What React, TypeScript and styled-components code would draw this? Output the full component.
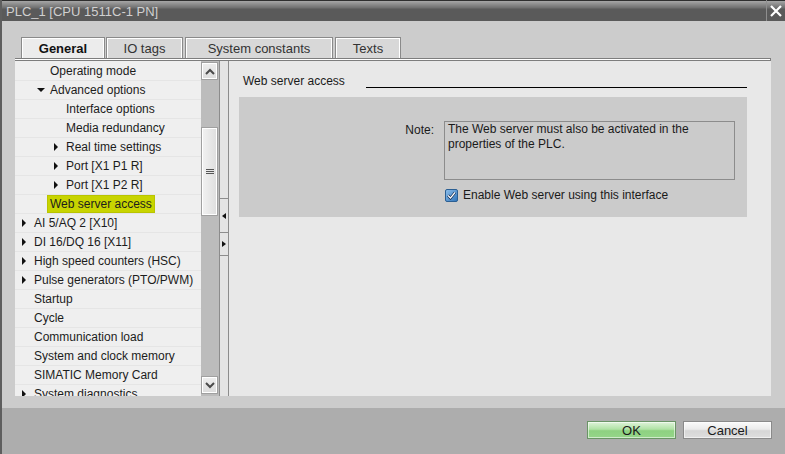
import React from 'react';
import styled, { createGlobalStyle } from 'styled-components';

const Global = createGlobalStyle`
  html, body { margin: 0; padding: 0; background: #cccccc; }
  body { font-family: "Liberation Sans", Arial, sans-serif; }
  * { box-sizing: border-box; }
`;

const Window = styled.div`
  width: 785px;
  height: 454px;
  display: flex;
  flex-direction: column;
  overflow: hidden;
  border-left: 2px solid #5e5e5e;
  background: #cccccc;
`;

const TitleBar = styled.div`
  height: 21px;
  flex: none;
  display: flex;
  align-items: center;
  padding-left: 4px;
  background: linear-gradient(#2e2e2e 0 1px, #a6a6a6 1px, #6e6e6e 8px, #5a5a5a 9px, #5a5a5a 100%);
  color: #d0d0d0;
  font-size: 13px;
`;

const TitleText = styled.div`
  flex: 1;
  padding-top: 1px;
`;

const CloseButton = styled.div`
  width: 19px;
  height: 21px;
  border-left: 1px solid #8e8e8e;
  display: flex;
  align-items: center;
  justify-content: center;
`;

const Body = styled.div`
  flex: 1;
  display: flex;
  flex-direction: column;
  padding: 16px 14px 12px 13px;
  min-height: 0;
`;

const TabStrip = styled.div`
  display: flex;
  height: 21px;
  padding-left: 6px;
  flex: none;
`;

const Tab = styled.div<{ $w: number; $gap: number; $active?: boolean }>`
  width: ${p => p.$w}px;
  margin-right: ${p => p.$gap}px;
  height: 21px;
  border: 1px solid #8a8a8a;
  border-bottom: none;
  box-shadow: inset 1px 1px 0 #ffffff, inset -1px 0 0 #ffffff;
  background: ${p => (p.$active ? '#ececec' : '#d8d8d8')};
  font-size: 13px;
  font-weight: ${p => (p.$active ? 700 : 400)};
  color: ${p => (p.$active ? '#111' : '#333')};
  display: flex;
  align-items: center;
  justify-content: center;
  padding-top: 1px;
`;

const Panel = styled.div`
  flex: 1;
  display: flex;
  flex-direction: column;
  min-height: 0;
`;

const PanelEdge = styled.div`
  height: 3px;
  flex: none;
  background: #ffffff;
  border-top: 1px solid #7d7d7d;
  border-bottom: 1px solid #7d7d7d;
  border-right: 1px solid #7d7d7d;
`;

const PanelBody = styled.div`
  flex: 1;
  display: flex;
  min-height: 0;
`;

const Tree = styled.div`
  width: 186px;
  flex: none;
  background: #efefef;
  overflow: hidden;
  padding-top: 1px;
`;

const Row = styled.div<{ $level: number }>`
  height: 19px;
  border-bottom: 1px solid #e5e5e5;
  display: flex;
  align-items: center;
  padding-left: ${p => 7 + p.$level * 16}px;
  font-size: 12px;
  color: #1c1c1c;
  white-space: nowrap;
`;

const ArrowSlot = styled.div`
  width: 12px;
  height: 18px;
  flex: none;
  display: flex;
  align-items: center;
`;

const ArrowRight = styled.div`
  width: 0;
  height: 0;
  border-top: 4px solid transparent;
  border-bottom: 4px solid transparent;
  border-left: 4px solid #111;
`;

const ArrowDown = styled.div`
  width: 0;
  height: 0;
  border-left: 4px solid transparent;
  border-right: 4px solid transparent;
  border-top: 4px solid #111;
  margin-left: -1px;
`;

const RowLabel = styled.div<{ $selected?: boolean }>`
  height: 18px;
  line-height: 18px;
  margin-left: -3px;
  padding: 0 3px;
  background: ${p => (p.$selected ? '#c8d400' : 'transparent')};
  box-shadow: ${p => (p.$selected ? 'inset 0 0 0 1px #b9c400' : 'none')};
`;

const ScrollBar = styled.div`
  width: 18px;
  flex: none;
  background: #bcbcbc;
  display: flex;
  flex-direction: column;
  padding: 1px 1px 2px 0;
`;

const ScrollBtn = styled.div`
  height: 18px;
  flex: none;
  border: 1px solid #a0a0a0;
  box-shadow: inset 0 0 0 1px #ffffff;
  background: linear-gradient(#eeeeee, #dcdcdc);
  display: flex;
  align-items: center;
  justify-content: center;
`;

const Track = styled.div`
  flex: 1;
`;

const Thumb = styled.div<{ $top: number; $h: number }>`
  margin-top: ${p => p.$top}px;
  height: ${p => p.$h}px;
  border: 1px solid #a0a0a0;
  box-shadow: inset 0 0 0 1px #ffffff;
  background: linear-gradient(90deg, #f2f2f2, #dedede);
  display: flex;
  flex-direction: column;
  align-items: center;
  justify-content: center;
  gap: 1px;
`;

const Grip = styled.div`
  width: 8px;
  height: 1px;
  background: #555;
`;

const Splitter = styled.div`
  width: 10px;
  flex: none;
  background: #e4e4e4;
  border-left: 1px solid #8c8c8c;
  border-right: 1px solid #8c8c8c;
  display: flex;
  flex-direction: column;
  padding-top: 137px;
`;

const SplitBtn = styled.div<{ $h: number }>`
  height: ${p => p.$h}px;
  border-top: 1px solid #8c8c8c;
  display: flex;
  align-items: center;
  justify-content: center;
  &:last-child { border-bottom: 1px solid #8c8c8c; }
`;

const TinyLeft = styled.div`
  width: 0;
  height: 0;
  border-top: 3px solid transparent;
  border-bottom: 3px solid transparent;
  border-right: 4px solid #111;
`;

const TinyRight = styled.div`
  width: 0;
  height: 0;
  border-top: 3px solid transparent;
  border-bottom: 3px solid transparent;
  border-left: 4px solid #111;
`;

const Content = styled.div`
  flex: 1;
  background: #e8e8e8;
  padding: 12px 24px 0 10px;
`;

const HeadingRow = styled.div`
  display: grid;
  grid-template-columns: 123px 1fr;
  align-items: end;
  height: 16px;
  padding-left: 4px;
`;

const HeadingText = styled.div`
  font-size: 12px;
  line-height: 16px;
  color: #1a1a1a;
  white-space: nowrap;
`;

const HeadingLine = styled.div`
  height: 1px;
  background: #000;
  margin-bottom: 1px;
`;

const GroupBox = styled.div`
  margin-top: 8px;
  height: 120px;
  background: #cbcbcb;
  padding-top: 24px;
  display: grid;
  grid-template-columns: 195px 291px;
  grid-auto-rows: min-content;
  column-gap: 10px;
  row-gap: 8px;
`;

const FieldLabel = styled.div`
  text-align: right;
  font-size: 12px;
  line-height: 15px;
  padding-top: 2px;
  color: #1a1a1a;
`;

const NoteBox = styled.div`
  height: 59px;
  border: 1px solid #8c8c8c;
  padding: 0 3px;
  font-size: 12px;
  line-height: 15px;
  color: #1a1a1a;
`;

const CheckRow = styled.div`
  grid-column: 2;
  display: flex;
  align-items: center;
  gap: 5px;
  padding-left: 1px;
  font-size: 12px;
  line-height: 15px;
  color: #1a1a1a;
`;

const Footer = styled.div`
  height: 46px;
  flex: none;
  background: #adadad;
  display: flex;
  justify-content: flex-end;
  align-items: flex-start;
  gap: 7px;
  padding: 13px 13px 0 0;
`;

const DlgButton = styled.div<{ $w: number; $primary?: boolean }>`
  width: ${p => p.$w}px;
  height: 18px;
  border: 1px solid ${p => (p.$primary ? '#6a9466' : '#8a8a8a')};
  box-shadow: inset 0 0 0 1px rgba(255, 255, 255, 0.55);
  background: ${p =>
    p.$primary
      ? 'linear-gradient(#dff3da, #b0e2a5 45%, #8ed181 55%, #95d689)'
      : 'linear-gradient(#fbfbfb, #ebebeb 45%, #d6d6d6 55%, #dedede)'};
  font-size: 13px;
  color: #1a1a1a;
  display: flex;
  align-items: center;
  justify-content: center;
`;

type Item = { label: string; level: number; arrow?: 'right' | 'down'; selected?: boolean };

const items: Item[] = [
  { label: 'Operating mode', level: 1 },
  { label: 'Advanced options', level: 1, arrow: 'down' },
  { label: 'Interface options', level: 2 },
  { label: 'Media redundancy', level: 2 },
  { label: 'Real time settings', level: 2, arrow: 'right' },
  { label: 'Port [X1 P1 R]', level: 2, arrow: 'right' },
  { label: 'Port [X1 P2 R]', level: 2, arrow: 'right' },
  { label: 'Web server access', level: 1, selected: true },
  { label: 'AI 5/AQ 2 [X10]', level: 0, arrow: 'right' },
  { label: 'DI 16/DQ 16 [X11]', level: 0, arrow: 'right' },
  { label: 'High speed counters (HSC)', level: 0, arrow: 'right' },
  { label: 'Pulse generators (PTO/PWM)', level: 0, arrow: 'right' },
  { label: 'Startup', level: 0 },
  { label: 'Cycle', level: 0 },
  { label: 'Communication load', level: 0 },
  { label: 'System and clock memory', level: 0 },
  { label: 'SIMATIC Memory Card', level: 0 },
  { label: 'System diagnostics', level: 0, arrow: 'right' },
];

const Chevron = ({ up }: { up?: boolean }) => (
  <svg width="10" height="7" viewBox="0 0 10 7">
    <polyline
      points={up ? '1,6 5,2 9,6' : '1,1 5,5 9,1'}
      fill="none"
      stroke="#4a4a4a"
      strokeWidth="2"
    />
  </svg>
);

const CheckIcon = () => (
  <svg width="13" height="13" viewBox="0 0 13 13">
    <defs>
      <linearGradient id="cbg" x1="0" y1="0" x2="1" y2="1">
        <stop offset="0" stopColor="#8fc0ec" />
        <stop offset="1" stopColor="#2f73b8" />
      </linearGradient>
    </defs>
    <rect x="0.5" y="0.5" width="12" height="12" rx="1.5" fill="url(#cbg)" stroke="#2b5f93" />
    <polyline points="3,6.5 5.5,9 10,3.5" fill="none" stroke="#0b2247" strokeWidth="2.6" />
    <polyline points="3,6.5 5.5,9 10,3.5" fill="none" stroke="#ffffff" strokeWidth="1.2" />
  </svg>
);

export default function App() {
  return (
    <>
      <Global />
      <Window>
        <TitleBar>
          <TitleText>PLC_1 [CPU 1511C-1 PN]</TitleText>
          <CloseButton>
            <svg width="12" height="12" viewBox="0 0 12 12">
              <path d="M1 1 L11 11 M11 1 L1 11" stroke="#ffffff" strokeWidth="2.2" />
            </svg>
          </CloseButton>
        </TitleBar>
        <Body>
          <TabStrip>
            <Tab $w={84} $gap={1} $active>General</Tab>
            <Tab $w={77} $gap={2}>IO tags</Tab>
            <Tab $w={148} $gap={2}>System constants</Tab>
            <Tab $w={66} $gap={0}>Texts</Tab>
          </TabStrip>
          <Panel>
            <PanelEdge />
            <PanelBody>
              <Tree>
                {items.map(it => (
                  <Row key={it.label} $level={it.level}>
                    <ArrowSlot>
                      {it.arrow === 'right' && <ArrowRight />}
                      {it.arrow === 'down' && <ArrowDown />}
                    </ArrowSlot>
                    <RowLabel $selected={it.selected}>{it.label}</RowLabel>
                  </Row>
                ))}
              </Tree>
              <ScrollBar>
                <ScrollBtn>
                  <Chevron up />
                </ScrollBtn>
                <Track>
                  <Thumb $top={47} $h={89}>
                    <Grip />
                    <Grip />
                    <Grip />
                  </Thumb>
                </Track>
                <ScrollBtn>
                  <Chevron />
                </ScrollBtn>
              </ScrollBar>
              <Splitter>
                <SplitBtn $h={34}>
                  <TinyLeft />
                </SplitBtn>
                <SplitBtn $h={24}>
                  <TinyRight />
                </SplitBtn>
              </Splitter>
              <Content>
                <HeadingRow>
                  <HeadingText>Web server access</HeadingText>
                  <HeadingLine />
                </HeadingRow>
                <GroupBox>
                  <FieldLabel>Note:</FieldLabel>
                  <NoteBox>
                    The Web server must also be activated in the
                    <br />
                    properties of the PLC.
                  </NoteBox>
                  <CheckRow>
                    <CheckIcon />
                    Enable Web server using this interface
                  </CheckRow>
                </GroupBox>
              </Content>
            </PanelBody>
          </Panel>
        </Body>
        <Footer>
          <DlgButton $w={89} $primary>OK</DlgButton>
          <DlgButton $w={89}>Cancel</DlgButton>
        </Footer>
      </Window>
    </>
  );
}
